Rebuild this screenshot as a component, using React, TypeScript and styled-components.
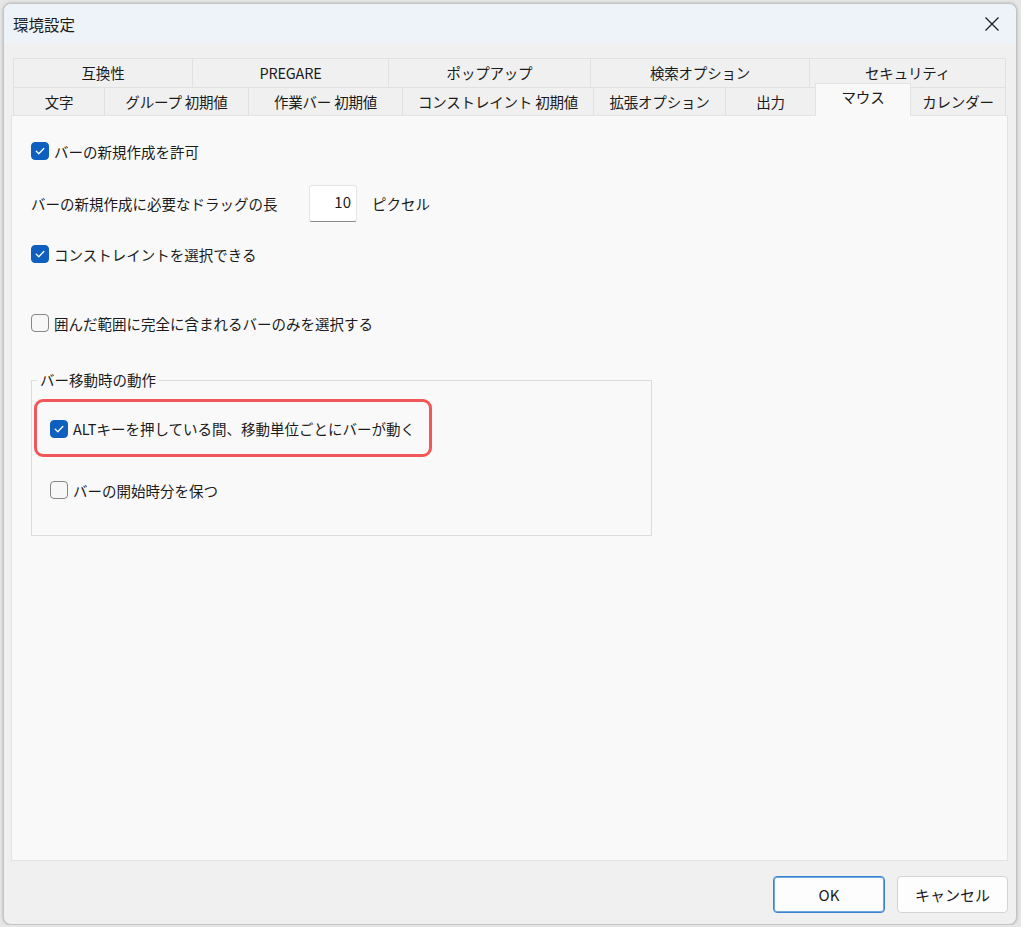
import styled, { createGlobalStyle } from "styled-components";

const GlobalStyle = createGlobalStyle`
    html, body {
        margin: 0;
        padding: 0;
        background: #e6e6e6;
    }
    body {
        font-family: "Noto Sans CJK JP", "Noto Sans", "Liberation Sans", sans-serif;
        color: #1b1b1b;
    }
`;

const Window = styled.div`
    margin: 3px 0 0 3px;
    width: 1014px;
    height: 922px;
    box-sizing: border-box;
    border: 1px solid #c4c4c4;
    border-radius: 8px;
    overflow: hidden;
    background: #f0f0f0;
    display: flex;
    flex-direction: column;
    box-shadow: 0 0 3px rgba(0, 0, 0, 0.25);
`;

const TitleBar = styled.div`
    height: 39px;
    flex: none;
    background: #eef3f9;
    display: flex;
    align-items: center;
    justify-content: space-between;
    padding: 0 14px 0 9px;
    font-size: 15.5px;
`;

const CloseButton = styled.div`
    width: 20px;
    height: 20px;
    display: flex;
    align-items: center;
    justify-content: center;
`;

const Body = styled.div`
    flex: 1;
    display: flex;
    flex-direction: column;
    padding: 15px 8px 0 7px;
`;

const TabArea = styled.div`
    margin: 0 2px 0 2px;
    display: flex;
    flex-direction: column;
`;

const TabRow = styled.div`
    display: flex;
    height: ${(p: { h: number }) => p.h}px;
`;

const Tab = styled.div<{ w: number; selected?: boolean }>`
    width: ${(p) => p.w}px;
    flex: none;
    box-sizing: border-box;
    display: flex;
    align-items: center;
    justify-content: center;
    font-size: 14.5px;
    letter-spacing: -0.2px;
    line-height: 20px;
    border: 1px solid #e1e1e1;
    border-bottom: none;
    margin-left: -1px;
    &:first-child {
        margin-left: 0;
    }
    background: ${(p) => (p.selected ? "#f9f9f9" : "#f0f0f0")};
    ${(p) =>
        p.selected &&
        `
        margin-top: -4px;
        height: calc(100% + 5px);
        padding-bottom: 6px;
        position: relative;
        z-index: 2;
        border-color: #e3e3e3;
    `}
`;

const Panel = styled.div`
    height: 746px;
    box-sizing: border-box;
    background: #f9f9f9;
    border: 1px solid #e3e3e3;
    padding: 23px 19px 0 19px;
    position: relative;
    z-index: 1;
`;

const CheckRow = styled.label<{ mt?: number; ml?: number }>`
    display: flex;
    align-items: center;
    height: 24px;
    gap: 5px;
    font-size: 14.5px;
    margin-top: ${(p) => p.mt ?? 0}px;
    margin-left: ${(p) => p.ml ?? 0}px;
`;

const Box = styled.span<{ checked?: boolean }>`
    width: 18px;
    height: 18px;
    box-sizing: border-box;
    border-radius: 4px;
    flex: none;
    display: flex;
    align-items: center;
    justify-content: center;
    background: ${(p) => (p.checked ? "#0f5fbf" : "#f7f7f7")};
    border: 1px solid ${(p) => (p.checked ? "#0f5fbf" : "#868686")};
`;

const InputRow = styled.div`
    display: flex;
    align-items: center;
    margin-top: 22px;
    font-size: 14.5px;
`;

const InputLabel = styled.span`
    width: 278px;
`;

const NumberBox = styled.div`
    width: 48px;
    height: 37px;
    box-sizing: border-box;
    background: #ffffff;
    border: 1px solid #e6e6e6;
    border-bottom: 1px solid #8a8a8a;
    border-radius: 3px;
    display: flex;
    align-items: center;
    justify-content: flex-end;
    padding: 0 5px 4px 0;
    font-size: 15px;
`;

const Unit = styled.span`
    margin-left: 15px;
`;

const Group = styled.fieldset`
    margin: 35px 0 0 0;
    width: 621px;
    box-sizing: border-box;
    border: 1px solid #dcdcdc;
    padding: 9px 2px 33px 2px;
    min-width: 0;
`;

const Legend = styled.legend`
    font-size: 14.5px;
    line-height: 20px;
    padding: 0 3px;
    margin-left: 3px;
`;

const Highlight = styled.div`
    width: 398px;
    height: 58px;
    box-sizing: border-box;
    border: 3px solid #f25757;
    border-radius: 9px;
    display: flex;
    align-items: center;
    padding: 1px 0 0 13px;
`;

const Footer = styled.div`
    flex: 1;
    display: flex;
    justify-content: flex-end;
    align-items: flex-start;
    gap: 12px;
    padding-top: 15px;
`;

const Button = styled.div<{ primary?: boolean; w: number }>`
    width: ${(p) => p.w}px;
    height: 37px;
    box-sizing: border-box;
    border-radius: 4px;
    background: #fdfdfd;
    border: 1px solid ${(p) => (p.primary ? "#3b83d0" : "#d3d3d3")};
    ${(p) => p.primary && "box-shadow: inset 0 0 0 1px #6ea6e0;"}
    display: flex;
    align-items: center;
    justify-content: center;
    font-size: 15px;
    padding-bottom: 1px;
`;

const topTabs = [
    { label: "互換性", w: 180 },
    { label: "PREGARE", w: 197 },
    { label: "ポップアップ", w: 203 },
    { label: "検索オプション", w: 220 },
    { label: "セキュリティ", w: 197 },
];

const bottomTabs = [
    { label: "文字", w: 92 },
    { label: "グループ 初期値", w: 145 },
    { label: "作業バー 初期値", w: 155 },
    { label: "コンストレイント 初期値", w: 192 },
    { label: "拡張オプション", w: 133 },
    { label: "出力", w: 91 },
    { label: "マウス", w: 96, selected: true },
    { label: "カレンダー", w: 96 },
];

function Check({ checked }: { checked?: boolean }) {
    return (
        <Box checked={checked}>
            {checked && (
                <svg width="12" height="12" viewBox="0 0 12 12">
                    <path d="M2.3 6.3 L4.8 8.7 L9.8 3.5" fill="none" stroke="#fff" strokeWidth="1.3" strokeLinecap="round" strokeLinejoin="round" />
                </svg>
            )}
        </Box>
    );
}

export default function App() {
    return (
        <>
            <GlobalStyle />
            <Window>
                <TitleBar>
                    <span>環境設定</span>
                    <CloseButton>
                        <svg width="16" height="16" viewBox="0 0 16 16">
                            <path d="M1.5 1.5 L14.5 14.5 M14.5 1.5 L1.5 14.5" stroke="#1f1f1f" strokeWidth="1.3" />
                        </svg>
                    </CloseButton>
                </TitleBar>
                <Body>
                    <TabArea>
                        <TabRow h={29}>
                            {topTabs.map((t) => (
                                <Tab key={t.label} w={t.w}>{t.label}</Tab>
                            ))}
                        </TabRow>
                        <TabRow h={28}>
                            {bottomTabs.map((t) => (
                                <Tab key={t.label} w={t.w} selected={t.selected}>{t.label}</Tab>
                            ))}
                        </TabRow>
                    </TabArea>
                    <Panel>
                        <CheckRow>
                            <Check checked />
                            バーの新規作成を許可
                        </CheckRow>
                        <InputRow>
                            <InputLabel>バーの新規作成に必要なドラッグの長</InputLabel>
                            <NumberBox>10</NumberBox>
                            <Unit>ピクセル</Unit>
                        </InputRow>
                        <CheckRow mt={20}>
                            <Check checked />
                            コンストレイントを選択できる
                        </CheckRow>
                        <CheckRow mt={45}>
                            <Check />
                            囲んだ範囲に完全に含まれるバーのみを選択する
                        </CheckRow>
                        <Group>
                            <Legend>バー移動時の動作</Legend>
                            <Highlight>
                                <CheckRow>
                                    <Check checked />
                                    ALTキーを押している間、移動単位ごとにバーが動く
                                </CheckRow>
                            </Highlight>
                            <CheckRow mt={21} ml={16}>
                                <Check />
                                バーの開始時分を保つ
                            </CheckRow>
                        </Group>
                    </Panel>
                    <Footer>
                        <Button primary w={112}>OK</Button>
                        <Button w={111}>キャンセル</Button>
                    </Footer>
                </Body>
            </Window>
        </>
    );
}
